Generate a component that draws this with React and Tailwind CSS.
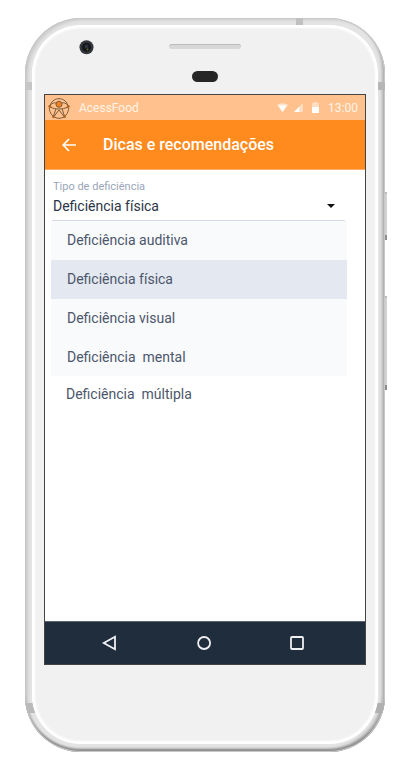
import { useState } from "react";

const options = [
  "Deficiência auditiva",
  "Deficiência física",
  "Deficiência visual",
  "Deficiência  mental",
];
const lastOption = "Deficiência  múltipla";

function Logo() {
  return (
    <svg className="h-6 w-6" viewBox="0 0 24 24" fill="none" stroke="#7a5a3c" strokeWidth="1">
      <path d="M2 9.500C4 4 8 2.700 11 2.700S18 4 20 9.500" />
      <path d="M1.300 11.500C1.300 17 5 22.300 11 22.300S20.700 17 20.700 11.500" />
      <path d="M2 9.500C4.500 6.800 6.500 6.500 8 7M20 9.500C17.500 6.800 15.500 6.500 14 7" />
      <path d="M2 11C5 12.500 8 13 11 13s6-.5 9-2" />
      <path d="M7.800 13L5.300 21M14.200 13l2.500 8M6 20.500l5-6.500 5 6.500" />
      <circle cx="11" cy="8.300" r="3" fill="#f5821f" />
      <g fill="#b0601a" stroke="none">
        <circle cx="1.800" cy="10.300" r="1.400" />
        <circle cx="20.200" cy="10.300" r="1.400" />
        <circle cx="5.400" cy="20.700" r="1.300" />
        <circle cx="16.600" cy="20.700" r="1.300" />
      </g>
    </svg>
  );
}

function StatusBar() {
  return (
    <div className="flex h-[25px] items-center bg-[#ffc28e] pr-[7px] pl-[3px] text-xs text-[#fff3e8]">
      <Logo />
      <span className="ml-[7px] flex-1">AcessFood</span>
      <svg className="h-[9px] w-[11px]" viewBox="0 0 11 9">
        <path d="M0 2Q5.500-1.500 11 2L5.500 9z" fill="#ffe4cc" />
        <path d="M1.500 2.500h8L5.500 9z" fill="#fff" />
      </svg>
      <svg className="ml-[6px] h-[9px] w-[9px]" viewBox="0 0 9 9">
        <path d="M9 0v9H0z" fill="#ffddc0" />
        <path d="M5.500 3.500V9H0z" fill="#fff" />
      </svg>
      <svg className="ml-[9px] h-[11px] w-[7px]" viewBox="0 0 7 11">
        <path d="M2 0h3v1h2v10H0V1h2z" fill="#ffddc0" />
        <path d="M0 5h7v6H0z" fill="#fff" />
      </svg>
      <time className="ml-[9px]">13:00</time>
    </div>
  );
}

function Header() {
  return (
    <header className="flex h-[50px] items-center border-b border-[#ffb066] bg-[#ff8a1e] pl-[17px] text-white">
      <button type="button" aria-label="Voltar" className="flex h-8 w-[14px] items-center">
        <svg className="h-[14px] w-[14px]" viewBox="0 0 14 14" fill="none" stroke="currentColor" strokeWidth="1.700">
          <path d="M14 7H1.500M7 1L1.200 7 7 13" />
        </svg>
      </button>
      <h1 className="ml-[27px] text-base font-medium">Dicas e recomendações</h1>
    </header>
  );
}

function TypePicker() {
  const [value, setValue] = useState(options[1]);
  return (
    <section className="flex-1 pt-[9px] pr-[18px] pl-[6px] text-sm">
      <div className="ml-px mr-[2px] border-b border-[#d5dae5] pl-px">
        <label htmlFor="tipo" className="block text-[11px] leading-4 text-[#9aa5ba]">
          Tipo de deficiência
        </label>
        <div className="relative">
          <select
            id="tipo"
            value={value}
            onChange={(e) => setValue(e.target.value)}
            className="block h-[25px] w-full appearance-none bg-transparent pb-1 text-[#2a3446] outline-none"
          >
            {[...options, lastOption].map((o) => (
              <option key={o}>{o}</option>
            ))}
          </select>
          <svg className="pointer-events-none absolute top-[9px] right-[10px] h-1 w-2" viewBox="0 0 8 4">
            <path d="M0 0h8L4 4z" fill="#111" />
          </svg>
        </div>
      </div>
      <div role="listbox" aria-label="Tipo de deficiência" className="text-[#4b566b]">
        <div role="presentation" className="flex h-[155px] flex-col">
          {options.map((o) => (
            <button
              key={o}
              type="button"
              role="option"
              aria-selected={o === value}
              onClick={() => setValue(o)}
              className={`flex-1 pl-4 text-left whitespace-pre ${o === value ? "bg-[#e4e8f1]" : "bg-[#f9fafc]"}`}
            >
              {o}
            </button>
          ))}
        </div>
        <button
          type="button"
          role="option"
          aria-selected={value === lastOption}
          onClick={() => setValue(lastOption)}
          className="h-9 w-full pl-[15px] text-left whitespace-pre"
        >
          {lastOption}
        </button>
      </div>
    </section>
  );
}

function NavBar() {
  return (
    <nav className="flex h-[43px] items-center justify-between border-t border-[#5c6670] bg-[#1f2d3d] pr-[60px] pl-[56px] text-[#eef0f2]">
      <button type="button" aria-label="Voltar à tela anterior">
        <svg className="h-4 w-4" viewBox="0 0 16 16" fill="none" stroke="currentColor" strokeWidth="1.800">
          <path d="M14 1.800v12.400L2.800 8z" />
        </svg>
      </button>
      <button type="button" aria-label="Início">
        <svg className="h-4 w-4" viewBox="0 0 16 16" fill="none" stroke="currentColor" strokeWidth="1.800">
          <circle cx="9.100" cy="8" r="6" />
        </svg>
      </button>
      <button type="button" aria-label="Aplicativos recentes">
        <svg className="h-4 w-4" viewBox="0 0 16 16" fill="none" stroke="currentColor" strokeWidth="1.800">
          <rect x="2" y="2" width="12" height="12" rx="1" />
        </svg>
      </button>
    </nav>
  );
}

export default function App() {
  return (
    <main className="bg-white pt-[18px] pr-[17px] pb-[18px] pl-[25px] font-[Roboto,sans-serif]">
      <div className="relative">
        <div className="absolute top-[174px] -right-[2px] h-12 w-[3px] border-t-2 border-b-[5px] border-t-[#bdbdbd] border-b-[#8d8d8d] bg-[#d2d2d2]" />
        <div className="absolute top-[278px] -right-[2px] h-[94px] w-[3px] border-t-2 border-b-[5px] border-t-[#bdbdbd] border-b-[#8d8d8d] bg-[#d2d2d2]" />
        <div className="relative overflow-hidden rounded-[56px] bg-[#e4e4e4] p-[7px] pb-2 shadow-[inset_0_0_0_1px_#c8c8c8,inset_0_-3px_2px_#8e8e8e,inset_-3px_-3px_3px_#b0b0b0,inset_3px_2px_3px_#cccccc]">
          <div className="absolute top-16 left-0 h-2 w-[7px] bg-[#c6c6c6]" />
          <div className="absolute top-16 right-0 h-2 w-[7px] bg-[#b6b6b6]" />
          <div className="absolute top-0 right-[82px] h-[7px] w-[7px] bg-[#c0c0c0]" />
          <div className="absolute bottom-[39px] left-0 h-[10px] w-[10px] bg-[#bababa]" />
          <div className="absolute right-0 bottom-[39px] h-[10px] w-[10px] bg-[#b0b0b0]" />
          <div className="relative flex flex-col rounded-[49px] bg-[#f1f1f1] px-3 shadow-[inset_0_0_2px_3px_#ffffff]">
            <div className="relative flex h-[69px] flex-col items-center pt-[19px]">
              <div className="h-[5px] w-[72px] rounded-full border-t border-[#bcbcbc] bg-[#d8d8d8]" />
              <div className="mt-[22px] h-[11px] w-[26px] rounded-full bg-[#262626]" />
              <svg className="absolute top-[15px] left-[35px] h-[15px] w-[15px]" viewBox="0 0 15 15">
                <circle cx="7.500" cy="7.200" r="7" fill="#33363a" />
                <circle cx="7.500" cy="7.200" r="4.500" fill="#15171a" />
                <circle cx="7.500" cy="6.500" r="2" fill="#2e323b" />
                <circle cx="8.500" cy="9.500" r="1" fill="#5f6a2e" />
              </svg>
            </div>
            <div className="flex min-h-[571px] flex-col border border-[#444444] bg-white">
              <StatusBar />
              <Header />
              <TypePicker />
              <NavBar />
            </div>
            <div className="h-[79px]" />
          </div>
        </div>
      </div>
    </main>
  );
}
